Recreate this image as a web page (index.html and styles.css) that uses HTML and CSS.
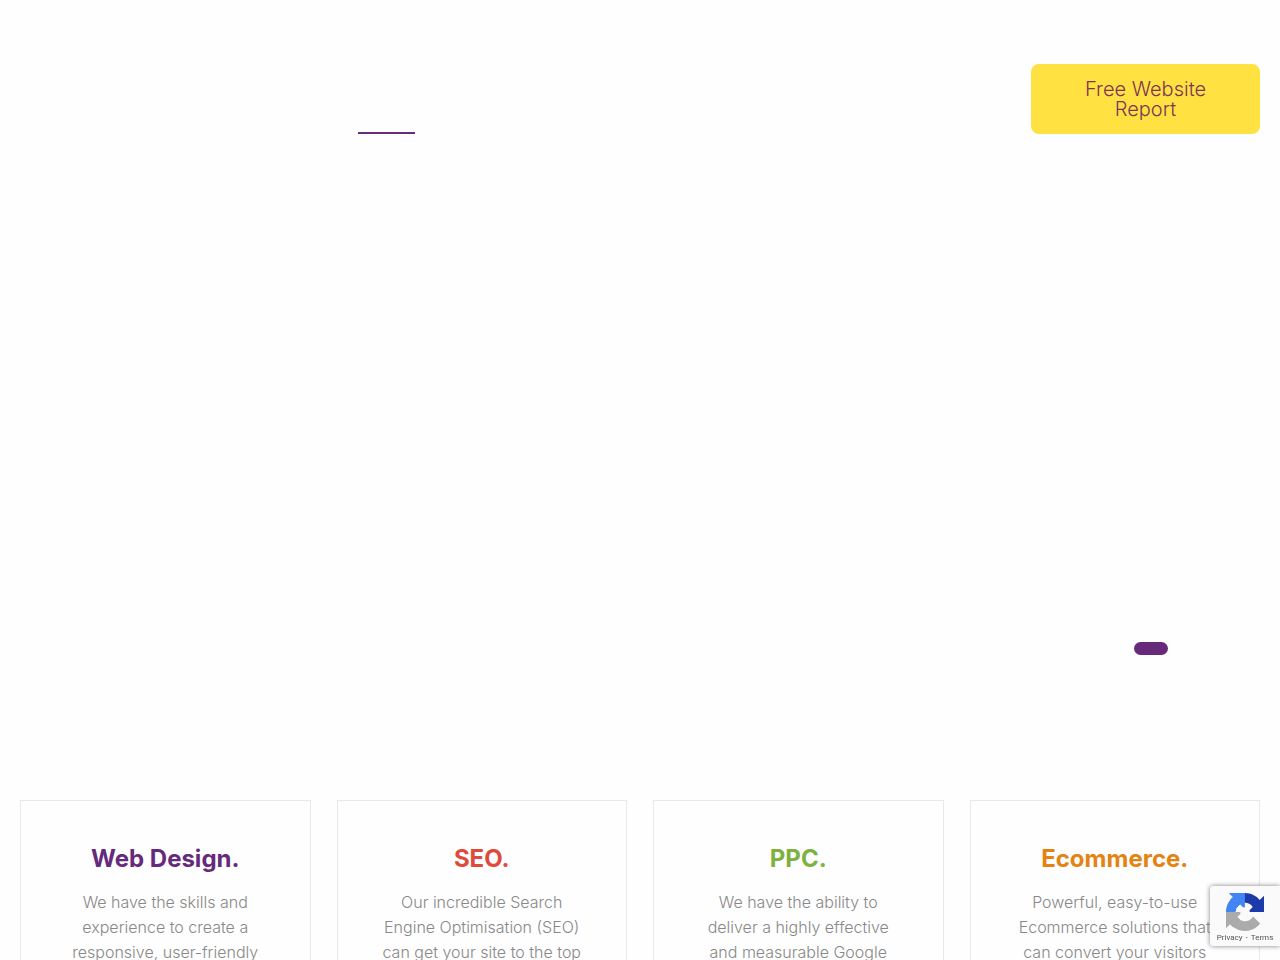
FILE: index.html
```html
<!DOCTYPE html>
<html lang="en">
<head>
<meta charset="utf-8">
<meta name="viewport" content="width=device-width, initial-scale=1">
<title>Web Design, SEO and PPC</title>
<link rel="stylesheet" href="styles.css">
</head>
<body>
<header class="header">
  <span class="nav-marker"></span>
  <a class="report-button" href="#">Free Website Report</a>
</header>
<main>
  <section class="hero">
    <span class="hero-dot"></span>
  </section>
  <section class="services">
    <article class="card">
      <h2 class="card-title purple">Web Design.</h2>
      <p class="card-text">We have the skills and<br>experience to create a<br>responsive, user-friendly</p>
    </article>
    <article class="card">
      <h2 class="card-title red">SEO.</h2>
      <p class="card-text">Our incredible Search<br>Engine Optimisation (SEO)<br>can get your site to the top</p>
    </article>
    <article class="card">
      <h2 class="card-title green">PPC.</h2>
      <p class="card-text">We have the ability to<br>deliver a highly effective<br>and measurable Google</p>
    </article>
    <article class="card">
      <h2 class="card-title orange">Ecommerce.</h2>
      <p class="card-text">Powerful, easy-to-use<br>Ecommerce solutions that<br>can convert your visitors</p>
    </article>
  </section>
</main>
<aside class="badge">
  <svg class="badge-logo" viewBox="0 0 64 64" aria-hidden="true">
    <path fill="#1c3aa9" d="M64 31.955l-.033-1.37V4.687l-7.16 7.16C50.948 4.674 42.033.093 32.05.093c-10.4 0-19.622 4.96-25.458 12.64l11.736 11.86a15.55 15.55 0 0 1 4.754-5.334c2.05-1.6 4.952-2.906 8.968-2.906.485 0 .86.057 1.135.163 4.976.393 9.288 3.14 11.828 7.124l-8.307 8.307L64 31.953"/>
    <path fill="#4285f4" d="M31.862.094l-1.37.033H4.594l7.16 7.16C4.58 13.147 0 22.06 0 32.046c0 10.4 4.96 19.622 12.64 25.458L24.5 45.768a15.55 15.55 0 0 1-5.334-4.754c-1.6-2.05-2.906-4.952-2.906-8.968 0-.485.057-.86.163-1.135.393-4.976 3.14-9.288 7.124-11.828l8.307 8.307L31.86.095"/>
    <path fill="#ababab" d="M.001 32.045l.033 1.37v25.898l7.16-7.16c5.86 7.173 14.774 11.754 24.76 11.754 10.4 0 19.622-4.96 25.458-12.64l-11.736-11.86a15.55 15.55 0 0 1-4.754 5.334c-2.05 1.6-4.952 2.906-8.968 2.906-.485 0-.86-.057-1.135-.163-4.976-.393-9.288-3.14-11.828-7.124l8.307-8.307c-10.522.04-22.4.066-27.295-.005"/>
    <circle cx="32" cy="32" r="8" fill="#fafafa"/>
  </svg>
  <div class="badge-links"><a href="#">Privacy</a><span>-</span><a href="#">Terms</a></div>
</aside>
</body>
</html>
```
FILE: styles.css
```css
* {
  box-sizing: border-box;
}

body {
  margin: 0;
  background: #fefefe;
  font-family: Inter, "Open Sans", sans-serif;
}

.header {
  display: flex;
  align-items: flex-end;
  justify-content: space-between;
  padding: 64px 20px 0;
}

.nav-marker {
  width: 57px;
  height: 2px;
  margin-left: 338px;
  background: #662d78;
}

.report-button {
  width: 229px;
  padding: 15px 40px;
  border-radius: 8px;
  background: #ffe141;
  color: #7b3657;
  font-size: 20px;
  font-weight: 300;
  line-height: 20px;
  text-align: center;
  text-decoration: none;
}

.hero {
  display: flex;
  align-items: flex-end;
  justify-content: flex-end;
  height: 666px;
  padding: 0 112px 145px;
}

.hero-dot {
  width: 34px;
  height: 13px;
  border-radius: 7px;
  background: #672a7a;
}

.services {
  display: grid;
  grid-template-columns: repeat(4, 1fr);
  gap: 26px;
  padding: 0 20px;
}

.card {
  padding: 42px 20px;
  border: 1px solid #e8e8e8;
  text-align: center;
}

.card-title {
  margin: 0 0 16px;
  font-size: 24px;
  font-weight: 700;
  line-height: 31px;
}

.purple { color: #662a7c; }
.red { color: #df4a3c; }
.green { color: #7cb23d; }
.orange { color: #e58312; }

.card-text {
  margin: 0;
  color: #888;
  font-size: 16px;
  font-weight: 300;
  line-height: 25px;
  white-space: nowrap;
}

.badge {
  position: fixed;
  right: 0;
  bottom: 14px;
  display: flex;
  flex-direction: column;
  align-items: center;
  gap: 2px;
  width: 70px;
  height: 60px;
  padding-top: 7px;
  border-radius: 3px 0 0 3px;
  background: #fafafa;
  box-shadow: 0 0 5px #808080;
}

.badge-logo {
  width: 38px;
  height: 38px;
}

.badge-links {
  display: flex;
  gap: 3px;
  color: #555;
  font-family: Roboto, "Liberation Sans", sans-serif;
  font-size: 8px;
  line-height: 10px;
  white-space: nowrap;
}

.badge-links a {
  color: inherit;
  text-decoration: none;
}
```
